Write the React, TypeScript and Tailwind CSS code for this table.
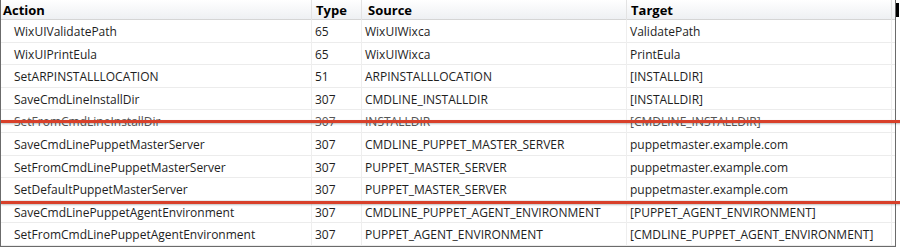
const rows = [
  ["WixUIValidatePath", "65", "WixUIWixca", "ValidatePath"],
  ["WixUIPrintEula", "65", "WixUIWixca", "PrintEula"],
  ["SetARPINSTALLLOCATION", "51", "ARPINSTALLLOCATION", "[INSTALLDIR]"],
  ["SaveCmdLineInstallDir", "307", "CMDLINE_INSTALLDIR", "[INSTALLDIR]"],
  ["SetFromCmdLineInstallDir", "307", "INSTALLDIR", "[CMDLINE_INSTALLDIR]"],
  ["SaveCmdLinePuppetMasterServer", "307", "CMDLINE_PUPPET_MASTER_SERVER", "puppetmaster.example.com"],
  ["SetFromCmdLinePuppetMasterServer", "307", "PUPPET_MASTER_SERVER", "puppetmaster.example.com"],
  ["SetDefaultPuppetMasterServer", "307", "PUPPET_MASTER_SERVER", "puppetmaster.example.com"],
  ["SaveCmdLinePuppetAgentEnvironment", "307", "CMDLINE_PUPPET_AGENT_ENVIRONMENT", "[PUPPET_AGENT_ENVIRONMENT]"],
  ["SetFromCmdLinePuppetAgentEnvironment", "307", "PUPPET_AGENT_ENVIRONMENT", "[CMDLINE_PUPPET_AGENT_ENVIRONMENT]"],
];

const cols = "grid grid-cols-[311px_50px_265px_265px_1fr]";

export default function App() {
  return (
    <div className="w-[900px] h-[249px] bg-white overflow-hidden font-['Open_Sans','Noto_Sans',sans-serif] text-[12px] text-[#1e1e1e]">
      <div className="relative w-[896px] h-[247px] border-l border-b border-r border-[#6b6b6b]">
        {/* header */}
        <div className={`${cols} h-[20px] bg-gradient-to-b from-white to-[#eef0f3] border-b border-[#d5d5d5] font-bold text-[13px] text-black leading-[20px]`}>
          <div className="pl-[2px] border-r border-[#e3e3e3]">Action</div>
          <div className="pl-[4px] border-r border-[#e3e3e3]">Type</div>
          <div className="pl-[6px] border-r border-[#e3e3e3]">Source</div>
          <div className="pl-[4px] border-r border-[#e3e3e3]">Target</div>
          <div className="relative">
            <div className="absolute right-[-4px] top-[3px] w-[3px] h-[14px] bg-black" />
          </div>
        </div>
        {/* body */}
        {rows.map((r, i) => (
          <div key={i} className={`${cols} h-[22.6px] border-b border-[#ececec] leading-[23px] ${i === 4 ? "text-[#555]" : ""}`}>
            <div className="pl-[13px] border-r border-[#eeeeee] whitespace-nowrap overflow-hidden">{r[0]}</div>
            <div className="pl-[3px] border-r border-[#eeeeee]">{r[1]}</div>
            <div className="pl-[3px] border-r border-[#eeeeee] whitespace-nowrap overflow-hidden">{r[2]}</div>
            <div className="pl-[3px] border-r border-[#eeeeee] whitespace-nowrap overflow-hidden">{r[3]}</div>
            <div />
          </div>
        ))}
        {/* red markup lines */}
        <div className="absolute left-0 top-[120px] w-[900px] h-[3px] bg-[#d8402a] shadow-[0_1px_2px_rgba(0,0,0,0.25)]" />
        <div className="absolute left-0 top-[201px] w-[900px] h-[3px] bg-[#d8402a] shadow-[0_1px_2px_rgba(0,0,0,0.25)]" />
      </div>
    </div>
  );
}
